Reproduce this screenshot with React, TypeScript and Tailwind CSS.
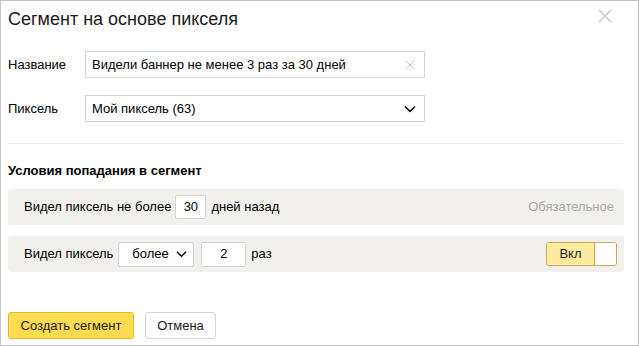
import React from 'react';

const font = { fontFamily: '"Liberation Sans", Arial, sans-serif' };

const Chevron: React.FC<{ className?: string }> = ({ className }) => (
  <svg className={className} width="12" height="8" viewBox="0 0 12 8" fill="none">
    <path d="M1 1.5l5 5 5-5" stroke="#000" strokeWidth="1.5" />
  </svg>
);

const App: React.FC = () => {
  return (
    <div
      style={font}
      className="relative w-[639px] h-[346px] bg-white border border-[#c4c4c4] text-[13px] text-black pl-[7px] pr-[14px] flex flex-col"
    >
      {/* header */}
      <div className="flex items-center h-[22px] mt-[7px]">
        <h1 className="text-[18px] leading-[22px] text-[#1a1a1a]">Сегмент на основе пикселя</h1>
      </div>
      <button className="absolute right-[26px] top-[8px] w-[14px] h-[14px]">
        <svg width="14" height="14" viewBox="0 0 14 14">
          <path d="M1 1l12 12M13 1L1 13" stroke="#c8c8c8" strokeWidth="1.6" />
        </svg>
      </button>

      {/* fields */}
      <div className="flex items-center mt-[21px]">
        <label className="w-[77px]">Название</label>
        <div className="flex items-center w-[340px] h-[27px] border border-[#d6d6d6] pl-[6px] pr-[9px]">
          <span className="flex-1">Видели баннер не менее 3 раз за 30 дней</span>
          <svg width="10" height="10" viewBox="0 0 10 10">
            <path d="M0.5 0.5l9 9M9.5 0.5l-9 9" stroke="#c6c6c6" strokeWidth="1" />
          </svg>
        </div>
      </div>
      <div className="flex items-center mt-[17px]">
        <label className="w-[77px]">Пиксель</label>
        <div className="flex items-center w-[340px] h-[27px] border border-[#d6d6d6] pl-[6px] pr-[8px]">
          <span className="flex-1">Мой пиксель (63)</span>
          <Chevron />
        </div>
      </div>

      <div className="h-px bg-[#eeeeee] mt-[21px] mr-[1px]" />

      {/* conditions */}
      <div className="font-bold mt-[19px] leading-[16px]">Условия попадания в сегмент</div>

      <div className="flex items-center h-[36px] mt-[10px] rounded-[3px] bg-[#f1f0ed] pl-4 pr-[10px]">
        <span>Видел пиксель не более</span>
        <div className="ml-[4px] w-[31px] h-[24px] border border-[#d4d4d4] rounded-[2px] bg-white flex items-center justify-center">
          30
        </div>
        <span className="ml-[5px]">дней назад</span>
        <span className="ml-auto text-[#a8a8a8]">Обязательное</span>
      </div>

      <div className="flex items-center h-[36px] mt-[11px] rounded-[3px] bg-[#f1f0ed] pl-4 pr-[7px]">
        <span>Видел пиксель</span>
        <div className="ml-[5px] w-[76px] h-[25px] border border-[#d4d4d4] rounded-[2px] bg-white flex items-center pl-[13px] gap-[7px]">
          <span>более</span>
          <Chevron className="w-[11px]" />
        </div>
        <div className="ml-[7px] w-[45px] h-[25px] border border-[#d4d4d4] rounded-[2px] bg-white flex items-center justify-center">
          2
        </div>
        <span className="ml-[5px]">раз</span>
        <div className="ml-auto flex h-[24px] w-[71px] border border-[#c6ad5c] rounded-[3px] overflow-hidden">
          <div className="w-[47px] bg-[#ffeba0] flex items-center justify-center text-[#222]">Вкл</div>
          <div className="flex-1 bg-white border-l border-[#c6ad5c]" />
        </div>
      </div>

      {/* footer */}
      <div className="flex items-center gap-[11px] mt-[40px]">
        <button className="h-[27px] w-[126px] rounded-[3px] bg-[#ffdb4d] border border-[#e2bb2e] text-[13px] text-[#1a1a1a]">
          Создать сегмент
        </button>
        <button className="h-[27px] w-[71px] rounded-[3px] bg-white border border-[#d4d4d4] text-[13px] text-[#1a1a1a]">
          Отмена
        </button>
      </div>
    </div>
  );
};

export default App;
